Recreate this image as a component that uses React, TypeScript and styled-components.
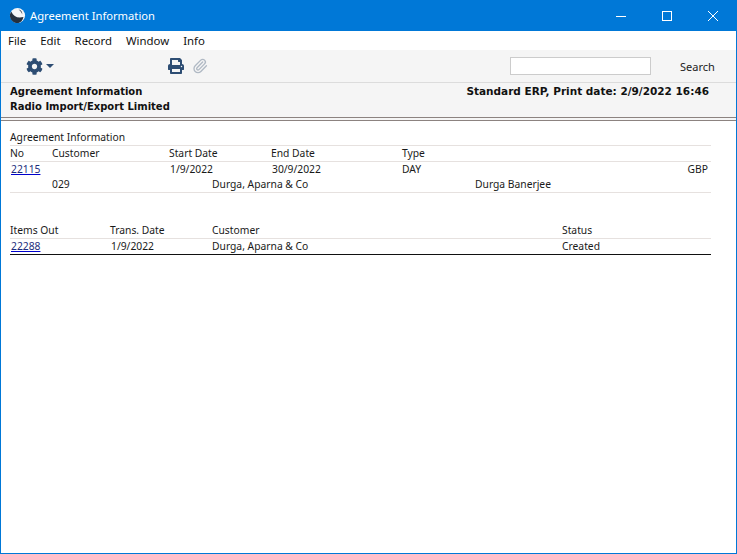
import React from "react";
import styled, { createGlobalStyle } from "styled-components";
import { FaCog, FaPrint } from "react-icons/fa";
import { Paperclip } from "lucide-react";

const Blue = "#0078d7";
const IconBlue = "#2d4d73";
const RuleColor = "#e6e1df";

const GlobalStyle = createGlobalStyle`
  html, body {
    margin: 0;
    padding: 0;
    background: #fff;
  }
  body {
    font-family: "Noto Sans", "Liberation Sans", sans-serif;
    font-size: 10.3px;
    color: #1a1a1a;
  }
`;

const Window = styled.div`
  width: 737px;
  height: 554px;
  box-sizing: border-box;
  border: 1px solid ${Blue};
  border-top: 0;
  display: flex;
  flex-direction: column;
  overflow: hidden;
`;

const TitleBar = styled.div`
  height: 31px;
  flex: none;
  background: ${Blue};
  display: flex;
  align-items: center;
  padding-left: 8px;
  color: #fff;
`;

const Title = styled.div`
  font-size: 11.2px;
  margin-left: 4px;
  flex: 1;
`;

const WindowButton = styled.button`
  width: 46px;
  height: 31px;
  padding: 0;
  border: 0;
  background: none;
  display: flex;
  align-items: center;
  justify-content: center;
`;

const MenuBar = styled.div`
  height: 19px;
  flex: none;
  display: flex;
  align-items: center;
  gap: 14px;
  padding-left: 7px;
  font-size: 11.4px;
  color: #111;
`;

const Toolbar = styled.div`
  height: 33px;
  flex: none;
  box-sizing: border-box;
  background: #f5f5f5;
  border-bottom: 1px solid #dcdcdc;
  display: flex;
  align-items: center;
`;

const GearButton = styled.div`
  display: flex;
  align-items: center;
  gap: 3px;
  margin-left: 25px;
  width: 142px;
  color: ${IconBlue};
`;

const Caret = styled.span`
  width: 0;
  height: 0;
  border-left: 4px solid transparent;
  border-right: 4px solid transparent;
  border-top: 4px solid ${IconBlue};
`;

const IconSlot = styled.div<{ $width: number; $color: string }>`
  width: ${(p) => p.$width}px;
  display: flex;
  color: ${(p) => p.$color};
`;

const ToolSpacer = styled.div`
  flex: 1;
`;

const SearchBox = styled.input`
  width: 141px;
  height: 18px;
  box-sizing: border-box;
  border: 1px solid #cccccc;
  background: #fff;
  padding: 0;
  margin-right: 29px;
`;

const SearchLabel = styled.div`
  width: 56px;
  font-size: 11px;
  color: #222;
`;

const ReportHeader = styled.div`
  height: 35px;
  flex: none;
  box-sizing: border-box;
  background: #f5f5f5;
  padding: 1px 27px 0 9px;
  border-bottom: 1px solid #8c8380;
  font-family: "DejaVu Sans", sans-serif;
  font-weight: bold;
  line-height: 15px;
  color: #111;
`;

const HeaderLine = styled.div`
  display: flex;
  justify-content: space-between;
`;

const HeaderText = styled.span<{ $size: number }>`
  font-size: ${(p) => p.$size}px;
`;

const SecondRule = styled.div`
  height: 3px;
  flex: none;
  background: #f5f5f5;
  border-bottom: 1px solid #8c8380;
  box-sizing: border-box;
`;

const Report = styled.div`
  flex: 1;
  background: #fff;
  padding: 9px 25px 0 9px;
`;

const SectionTitle = styled.div`
  height: 16px;
  line-height: 15px;
  border-bottom: 1px solid ${RuleColor};
  box-sizing: border-box;
`;

const Table = styled.div`
  margin-bottom: 30px;
`;

const Row = styled.div<{ $columns: string; $rule?: string }>`
  display: grid;
  grid-template-columns: ${(p) => p.$columns};
  height: ${(p) => (p.$rule ? 16 : 15)}px;
  line-height: 15px;
  box-sizing: border-box;
  border-bottom: ${(p) => (p.$rule ? `1px solid ${p.$rule}` : "0")};
`;

const RecordLink = styled.a`
  color: #1c2c7c;
  text-decoration: underline;
  text-decoration-color: #0000cc;
  padding-left: 1px;
`;

const DateCell = styled.div`
  padding-left: 1px;
`;

const RightCell = styled.div`
  text-align: right;
  padding-right: 3px;
`;

const agreementColumns = "42px 117px 102px 131px 1fr";
const contactColumns = "42px 160px 263px 1fr";
const itemsColumns = "100px 102px 350px 1fr";

function Logo() {
  return (
    <svg width="17" height="17" viewBox="0 0 18 18">
      <circle cx="9" cy="9" r="8" fill="#f4f6f8" />
      <path d="M2.500 5c2.300 5 6.600 7.200 12.800 5.600C14.500 14.500 12 17 9 17 4.500 17 1 13.400 1 9c0-1.500.5-2.900 1.500-4z" fill="#24303f" />
      <path d="M10 2.600c2.700.4 4.400 2.500 4 5.300-.6-2-1.900-3.900-4-5.300z" fill="#24303f" />
    </svg>
  );
}

function App() {
  return (
    <>
      <GlobalStyle />
      <Window>
        <TitleBar>
          <Logo />
          <Title>Agreement Information</Title>
          <WindowButton aria-label="Minimise">
            <svg width="10" height="10" viewBox="0 0 10 10">
              <path d="M0 5.500h10" stroke="#fff" />
            </svg>
          </WindowButton>
          <WindowButton aria-label="Maximise">
            <svg width="10" height="10" viewBox="0 0 10 10">
              <rect x="0.500" y="0.500" width="9" height="9" fill="none" stroke="#fff" />
            </svg>
          </WindowButton>
          <WindowButton aria-label="Close">
            <svg width="10" height="10" viewBox="0 0 10 10">
              <path d="M0 0l10 10M10 0L0 10" stroke="#fff" />
            </svg>
          </WindowButton>
        </TitleBar>
        <MenuBar>
          <span>File</span>
          <span>Edit</span>
          <span>Record</span>
          <span>Window</span>
          <span>Info</span>
        </MenuBar>
        <Toolbar>
          <GearButton>
            <FaCog size={17} />
            <Caret />
          </GearButton>
          <IconSlot $width={24} $color={IconBlue}>
            <FaPrint size={16} />
          </IconSlot>
          <IconSlot $width={20} $color="#b0b9c4">
            <Paperclip size={16} strokeWidth={2} />
          </IconSlot>
          <ToolSpacer />
          <SearchBox />
          <SearchLabel>Search</SearchLabel>
        </Toolbar>
        <ReportHeader>
          <HeaderLine>
            <HeaderText $size={10}>Agreement Information</HeaderText>
            <HeaderText $size={10.5}>Standard ERP, Print date: 2/9/2022 16:46</HeaderText>
          </HeaderLine>
          <HeaderLine>
            <HeaderText $size={10}>Radio Import/Export Limited</HeaderText>
          </HeaderLine>
        </ReportHeader>
        <SecondRule />
        <Report>
          <Table>
            <SectionTitle>Agreement Information</SectionTitle>
            <Row $columns={agreementColumns} $rule={RuleColor}>
              <div>No</div>
              <div>Customer</div>
              <div>Start Date</div>
              <div>End Date</div>
              <div>Type</div>
            </Row>
            <Row $columns={agreementColumns}>
              <RecordLink href="#22115">22115</RecordLink>
              <div />
              <DateCell>1/9/2022</DateCell>
              <DateCell>30/9/2022</DateCell>
              <Row $columns="1fr auto">
                <div>DAY</div>
                <RightCell>GBP</RightCell>
              </Row>
            </Row>
            <Row $columns={contactColumns} $rule={RuleColor}>
              <div />
              <div>029</div>
              <div>Durga, Aparna &amp; Co</div>
              <div>Durga Banerjee</div>
            </Row>
          </Table>
          <Table>
            <Row $columns={itemsColumns} $rule={RuleColor}>
              <div>Items Out</div>
              <div>Trans. Date</div>
              <div>Customer</div>
              <div>Status</div>
            </Row>
            <Row $columns={itemsColumns} $rule="#111">
              <RecordLink href="#22288">22288</RecordLink>
              <DateCell>1/9/2022</DateCell>
              <div>Durga, Aparna &amp; Co</div>
              <div>Created</div>
            </Row>
          </Table>
        </Report>
      </Window>
    </>
  );
}

export default App;
